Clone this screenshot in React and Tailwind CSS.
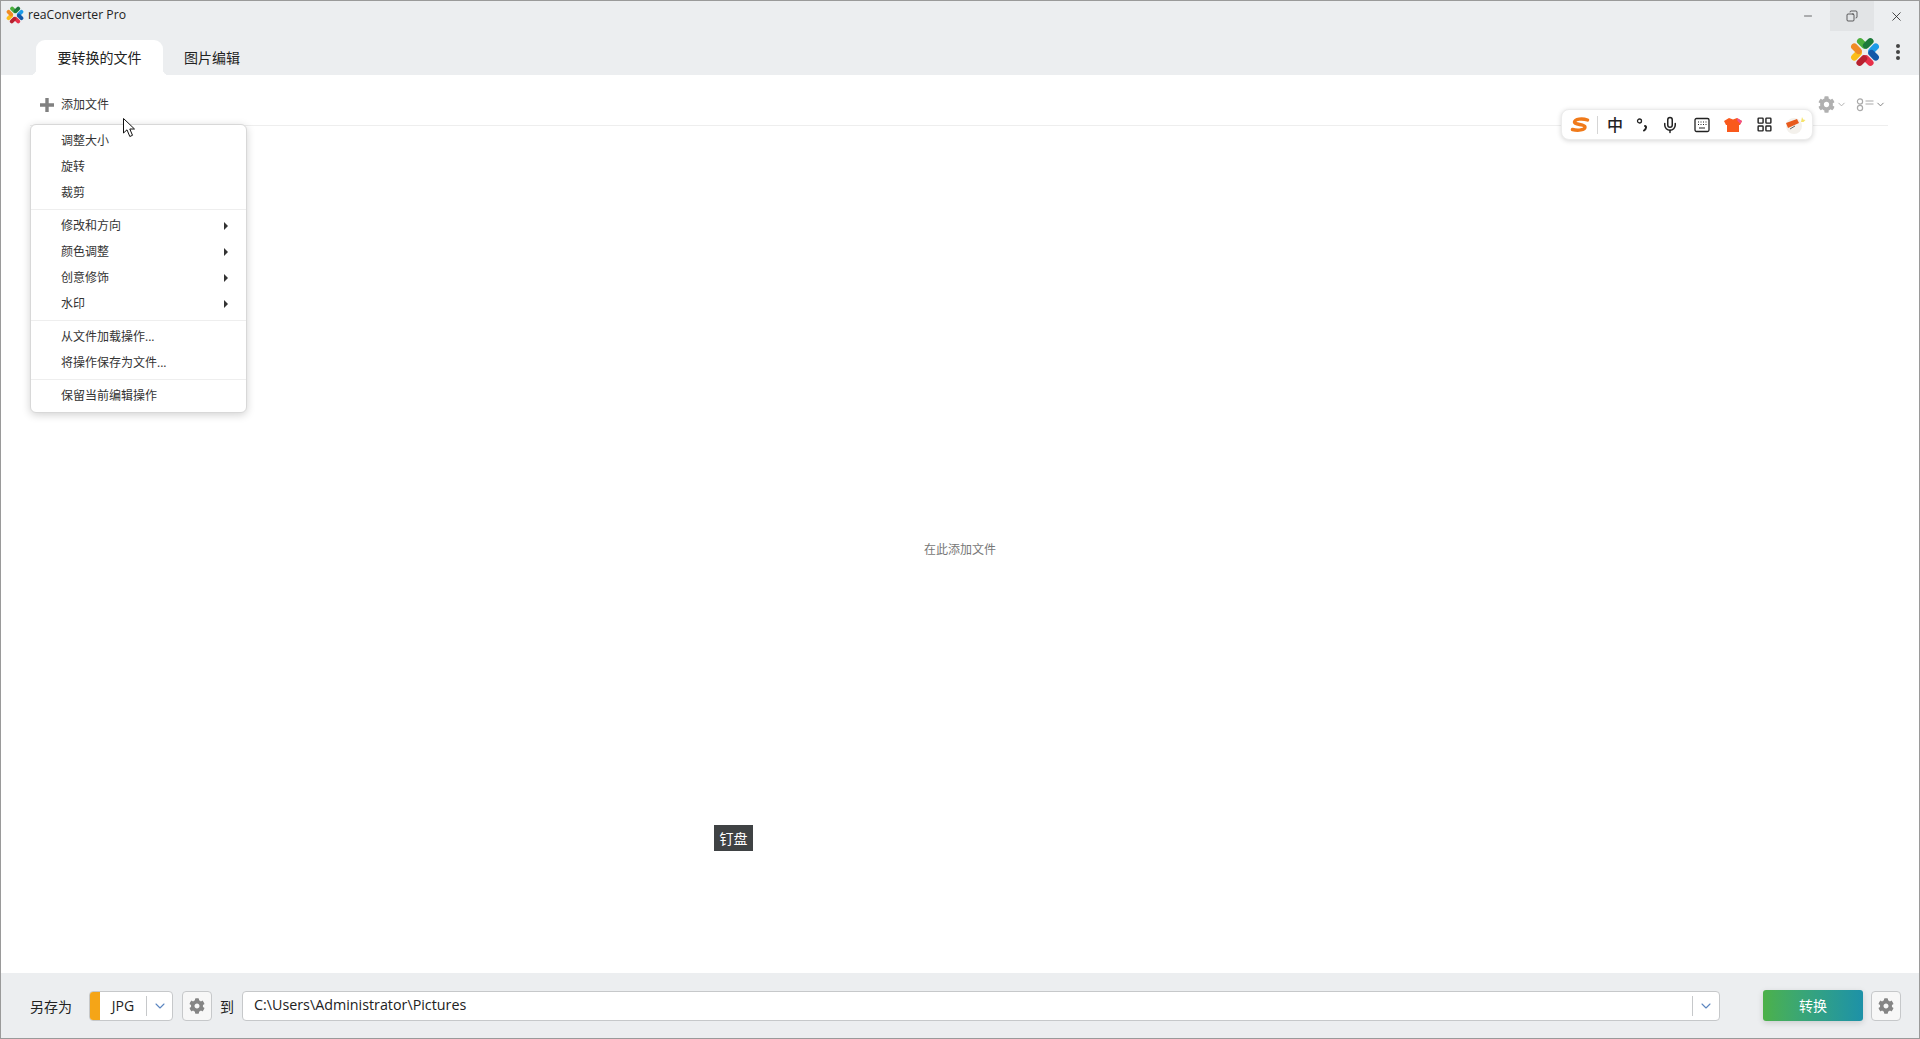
import { Minus, X, Copy, ChevronDown, Mic, LayoutGrid } from "lucide-react";
import { FaCog } from "react-icons/fa";

const fontStack = "font-['Open_Sans','Noto_Sans_CJK_SC',sans-serif]";

// four coloured arms around a white cross
function Logo({ className }) {
    return (
        <svg viewBox="0 0 28 28" className={className}>
            <g strokeWidth="6" strokeLinecap="round" fill="none">
                <path d="M9.5 4 L13.5 8" stroke="#4caf3c" />
                <path d="M19 4 L15 8" stroke="#1d7a3a" />
                <path d="M24 9 L20 13" stroke="#1e9be8" />
                <path d="M24 19 L20 15" stroke="#1458a8" />
                <path d="M19 24 L15 20" stroke="#e8304a" />
                <path d="M9 24 L13 20" stroke="#b8202f" />
                <path d="M4 19 L8 15" stroke="#fbbd18" />
                <path d="M4 9 L8 13" stroke="#f08a24" />
            </g>
        </svg>
    );
}

function Chevron() {
    return <ChevronDown className="w-4 h-4 text-[#5b86c0]" strokeWidth={1.6} />;
}

function GearButton() {
    return (
        <button className="w-[30px] h-[30px] flex items-center justify-center bg-[#f7f7f7] border border-[#c6c8ca] rounded-[4px]">
            <FaCog className="w-4 h-4 text-[#858585]" />
        </button>
    );
}

function MenuItem({ label, sub }) {
    return (
        <div className="h-[26px] flex items-center justify-between pl-[30px] pr-[18px] text-[12px] text-[#333]">
            <span>{label}</span>
            {sub && <span className="w-0 h-0 border-y-[4px] border-y-transparent border-l-[4px] border-l-[#333]" />}
        </div>
    );
}

function Sep() {
    return <div className="h-px my-[3px] bg-[#eeeeee]" />;
}

function ImeBar() {
    return (
        <div className="absolute left-[1560px] top-[108px] w-[252px] h-[31px] flex items-center bg-white rounded-[8px] border border-[#ececec] shadow-[0_1px_5px_rgba(0,0,0,0.16)] text-[#222]">
            <svg viewBox="0 0 20 16" className="ml-[8px] w-[20px] h-[16px]">
                <path d="M17.5 3 C12 1 5 2 4.5 5 C4 8 15 7 15 10 C15 13 8 14 2.5 12.5" fill="none" stroke="#f07a1a" strokeWidth="3.4" strokeLinecap="round" />
            </svg>
            <div className="ml-[7px] w-px h-[18px] bg-[#d5d5d5]" />
            <span className="ml-[9px] w-[16px] text-[16px] leading-none font-medium">中</span>
            <svg viewBox="0 0 12 16" className="ml-[13px] w-[12px] h-[16px]">
                <circle cx="3.5" cy="4" r="2" fill="none" stroke="#222" strokeWidth="1.3" />
                <path d="M9 9 C10.5 9 10.5 12 8 13.5" fill="none" stroke="#222" strokeWidth="2" strokeLinecap="round" />
            </svg>
            <Mic className="ml-[13px] w-[18px] h-[18px]" strokeWidth={2} />
            <svg viewBox="0 0 16 16" className="ml-[15px] w-[16px] h-[16px]">
                <rect x="1" y="1.5" width="14" height="13" rx="1.5" fill="none" stroke="#222" strokeWidth="1.3" />
                <path d="M4 5h1M6.5 5h1M9 5h1M11.5 5h1M4 7.5h1M6.5 7.5h1M9 7.5h1M11.5 7.5h1M5 11h6" stroke="#222" strokeWidth="1.2" />
            </svg>
            <svg viewBox="0 0 18 16" className="ml-[14px] w-[18px] h-[16px]">
                <path d="M5 1 L9 2.5 L13 1 L18 4 L16 8 L15 8 L15 15 L3 15 L3 8 L2 8 L0 4 Z" fill="#f9591c" />
                <path d="M13 1 L18 4 L16.5 7 L13.5 4 Z" fill="#f0508c" />
            </svg>
            <LayoutGrid className="ml-[14px] w-[17px] h-[17px]" strokeWidth={2} />
            <svg viewBox="0 0 22 18" className="ml-[11px] w-[22px] h-[18px]">
                <circle cx="10" cy="10" r="8" fill="#f4f1ec" />
                <path d="M2 7 L13 3 L15 7 L4 12 Z" fill="#e85a1c" />
                <path d="M6 13 L11 10" stroke="#666" strokeWidth="1" />
                <path d="M18 1 L19.2 3.5 L21.5 4 L19.5 6 L17 6 Z" fill="#f6e36a" />
            </svg>
        </div>
    );
}

export default function App() {
    return (
        <div className={`relative w-[1920px] h-[1039px] overflow-hidden flex flex-col bg-white border-l border-t border-b border-r border-[#9a9a9a] ${fontStack}`}>

            {/* TITLE BAR */}
            <div className="h-[30px] shrink-0 flex items-center bg-[#eceef0]">
                <Logo className="ml-[5px] w-[18px] h-[18px] mb-[2px]" />
                <span className="ml-[4px] mb-[2px] text-[12.2px] text-[#222]">reaConverter Pro</span>
                <div className="ml-auto flex items-center h-full">
                    <div className="w-[45px] h-full flex items-center justify-center">
                        <Minus className="w-[12px] h-[12px] text-[#222]" strokeWidth={1.3} />
                    </div>
                    <div className="w-[44px] h-full flex items-center justify-center bg-[#e2e4e6]">
                        <Copy className="w-[12px] h-[12px] text-[#222] -scale-x-100" strokeWidth={1.4} />
                    </div>
                    <div className="w-[45px] h-full flex items-center justify-center">
                        <X className="w-[15px] h-[15px] text-[#222]" strokeWidth={1.3} />
                    </div>
                </div>
            </div>

            {/* TABS */}
            <div className="h-[44px] shrink-0 flex items-end pl-[35px] bg-[#eceef0] text-[14px] text-[#222]">
                <div className="relative w-[127px] h-[35px] flex items-center justify-center bg-white rounded-t-[9px]">
                    要转换的文件
                    <div className="absolute left-[-6px] bottom-0 w-[6px] h-[6px] bg-[radial-gradient(circle_at_0_0,#eceef0_6px,#ffffff_6.5px)]" />
                    <div className="absolute right-[-6px] bottom-0 w-[6px] h-[6px] bg-[radial-gradient(circle_at_100%_0,#eceef0_6px,#ffffff_6.5px)]" />
                </div>
                <div className="ml-[21px] h-[35px] flex items-center">图片编辑</div>
                <div className="ml-auto mr-[19px] h-full flex items-center pb-[2px]">
                    <Logo className="w-[30px] h-[30px]" />
                    <div className="ml-[16px] w-[4px] flex flex-col gap-[2px]">
                        <span className="h-[4px] rounded-full bg-[#444]" />
                        <span className="h-[4px] rounded-full bg-[#444]" />
                        <span className="h-[4px] rounded-full bg-[#444]" />
                    </div>
                </div>
            </div>

            {/* TOOLBAR */}
            <div className="h-[51px] shrink-0 ml-[29px] mr-[31px] pt-[9px] flex items-center border-b border-[#eeeeee]">
                <svg viewBox="0 0 14 14" className="ml-[10px] w-[14px] h-[14px]">
                    <path d="M7 0v14M0 7h14" stroke="#808080" strokeWidth="3.4" />
                </svg>
                <span className="ml-[7px] text-[12px] text-[#333]">添加文件</span>
                <div className="ml-auto flex items-center mr-[2px] text-[#aaa]">
                    <FaCog className="w-[17px] h-[17px] text-[#b0b0b0]" />
                    <ChevronDown className="ml-[1px] w-[11px] h-[11px]" />
                    <svg viewBox="0 0 18 16" className="ml-[9px] w-[18px] h-[16px]">
                        <circle cx="4" cy="4.5" r="2.6" fill="none" stroke="#aaa" strokeWidth="1.2" />
                        <circle cx="4" cy="11" r="2.6" fill="none" stroke="#aaa" strokeWidth="1.2" />
                        <path d="M9.5 4h8M9.5 7h8" stroke="#aaa" strokeWidth="1.2" />
                    </svg>
                    <ChevronDown className="ml-[1px] w-[11px] h-[11px] text-[#777]" />
                </div>
            </div>

            {/* EMPTY LIST */}
            <div className="flex-1 flex items-center justify-center text-[12px] text-[#777]">在此添加文件</div>

            {/* BOTTOM BAR */}
            <div className="h-[65px] shrink-0 flex items-center pl-[29px] pr-[18px] bg-[#eceef0] text-[#222]">
                <span className="text-[14px] w-[59px] pt-[2px]">另存为</span>
                <div className="w-[84px] h-[30px] flex items-center bg-white border border-[#c6c8ca] rounded-[4px] overflow-hidden">
                    <div className="w-[10px] h-full bg-[#f5a517]" />
                    <span className="w-[46px] text-center text-[14px]">JPG</span>
                    <div className="w-px h-[20px] bg-[#c6c8ca]" />
                    <div className="flex-1 flex justify-center"><Chevron /></div>
                </div>
                <div className="ml-[9px]"><GearButton /></div>
                <span className="ml-[8px] w-[22px] text-[14px] pt-[2px]">到</span>
                <div className="flex-1 h-[30px] flex items-center bg-white border border-[#c6c8ca] rounded-[4px]">
                    <span className="pl-[11px] text-[14.3px] mb-[1px]">C:\Users\Administrator\Pictures</span>
                    <div className="ml-auto w-px h-[20px] bg-[#c6c8ca]" />
                    <div className="w-[26px] flex justify-center"><Chevron /></div>
                </div>
                <button className="ml-[43px] w-[100px] h-[31px] rounded-[3px] bg-gradient-to-r from-[#4cb148] to-[#1d91a8] text-white text-[14px] shadow-[0_2px_6px_rgba(0,0,0,0.14)]">转换</button>
                <div className="ml-[8px]"><GearButton /></div>
            </div>

            {/* DROPDOWN MENU */}
            <div className="absolute left-[29px] top-[123px] w-[217px] py-[3px] bg-white rounded-[6px] border border-[#d8d8d8] shadow-[0_2px_8px_rgba(0,0,0,0.18)]">
                <MenuItem label="调整大小" />
                <MenuItem label="旋转" />
                <MenuItem label="裁剪" />
                <Sep />
                <MenuItem label="修改和方向" sub />
                <MenuItem label="颜色调整" sub />
                <MenuItem label="创意修饰" sub />
                <MenuItem label="水印" sub />
                <Sep />
                <MenuItem label="从文件加载操作..." />
                <MenuItem label="将操作保存为文件..." />
                <Sep />
                <MenuItem label="保留当前编辑操作" />
            </div>

            <ImeBar />

            {/* TOOLTIP */}
            <div className="absolute left-[713px] top-[824px] w-[39px] h-[26px] flex items-center justify-center bg-[#3f4244] text-white text-[14px]">钉盘</div>

            {/* MOUSE CURSOR */}
            <svg viewBox="0 0 13 20" className="absolute left-[122px] top-[117px] w-[13px] h-[20px]">
                <path d="M0.5 0.5 L0.5 15 L4 11.8 L6.8 18.5 L9.5 17.3 L6.8 11 L11.5 11 Z" fill="#fff" stroke="#111" strokeWidth="1" />
            </svg>
        </div>
    );
}
